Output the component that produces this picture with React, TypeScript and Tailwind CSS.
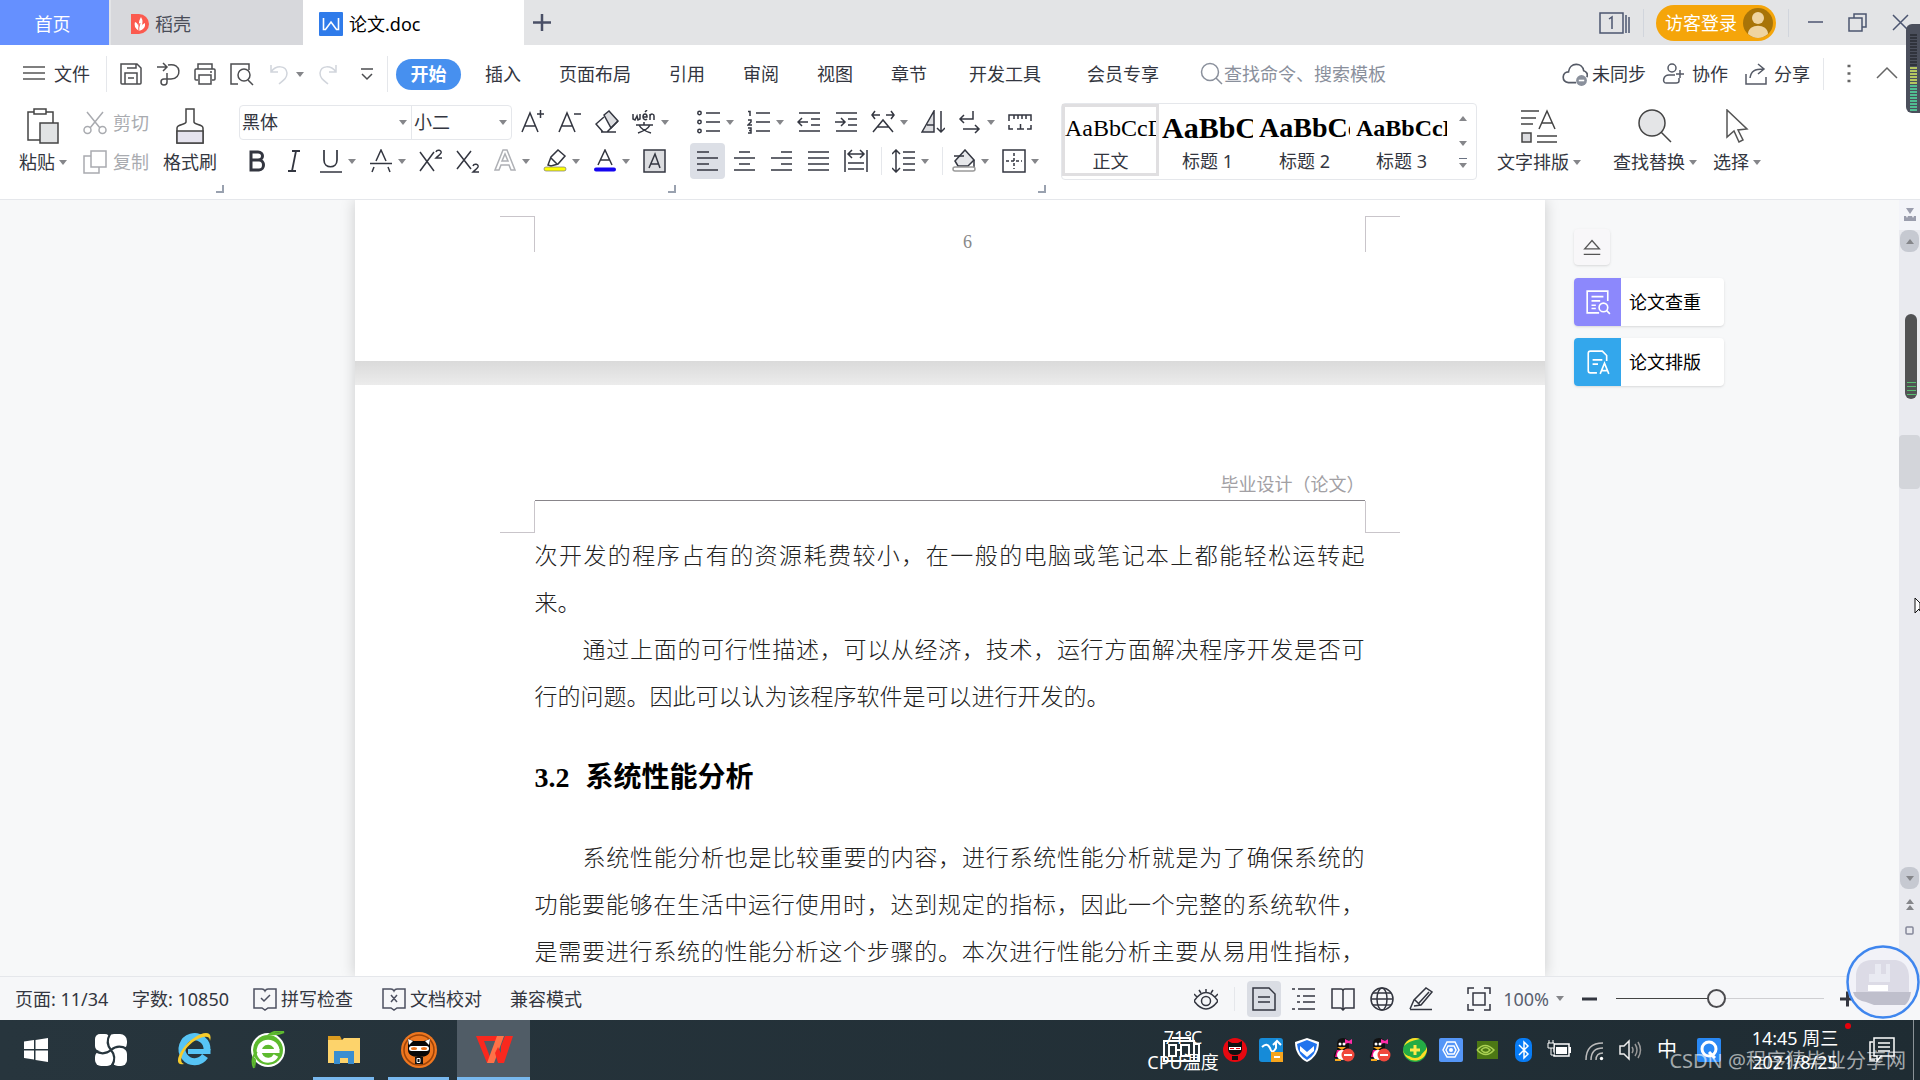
import React from "react";

type Kids = { children: React.ReactNode };

const doc = {
  carryOver: ["次开发的程序占有的资源耗费较小，在一般的电脑或笔记本上都能轻松运转起", "来。"],
  feasibility: [
    "通过上面的可行性描述，可以从经济，技术，运行方面解决程序开发是否可",
    "行的问题。因此可以认为该程序软件是可以进行开发的。",
  ],
  performance: [
    "系统性能分析也是比较重要的内容，进行系统性能分析就是为了确保系统的",
    "功能要能够在生活中运行使用时，达到规定的指标，因此一个完整的系统软件，",
    "是需要进行系统的性能分析这个步骤的。本次进行性能分析主要从易用性指标，",
  ],
};

function Svg({ size = 24, className = "", children }: Kids & { size?: number; className?: string }) {
  return (
    <svg
      width={size}
      height={size}
      viewBox="0 0 24 24"
      fill="none"
      stroke="currentColor"
      strokeWidth="1.5"
      className={`shrink-0 ${className}`}
      aria-hidden="true"
    >
      {children}
    </svg>
  );
}

function Caret({ up = false }: { up?: boolean }) {
  return (
    <svg width="8" height="5" viewBox="0 0 8 5" fill="#85868a" className="shrink-0" aria-hidden="true">
      <path d={up ? "M0 5h8L4 0z" : "M0 0h8L4 5z"} />
    </svg>
  );
}

function Tool({ label, caret = false, children }: Kids & { label: string; caret?: boolean }) {
  return (
    <button
      aria-label={label}
      className={`flex h-9 shrink-0 items-center gap-[5px] ${caret ? "w-[50px]" : "w-[37px]"}`}
    >
      <Svg>{children}</Svg>
      {caret && <Caret />}
    </button>
  );
}

function BigTool({ label, caret = true, children }: Kids & { label: string; caret?: boolean }) {
  return (
    <button className="flex shrink-0 flex-col items-center">
      <span className="flex h-[45px] items-center">{children}</span>
      <span className="flex h-7 items-center gap-1 whitespace-nowrap">
        {label}
        {caret && <Caret />}
      </span>
    </button>
  );
}

function Launcher() {
  return <span className="h-2 w-2 shrink-0 self-end border-r-2 border-b-2 border-gray-400" />;
}

function TitleBar() {
  return (
    <header className="flex h-[45px] shrink-0 items-center bg-[#e3e4e6]">
      <button className="h-full w-[109px] bg-[#6590ff] pt-[2px] pr-1 text-white">首页</button>
      <button className="ml-[2px] flex h-full w-[192px] items-center gap-[6px] bg-[#d7d8dc] pt-[2px] pl-5 text-[#4a4d58]">
        <svg width="18" height="20" viewBox="0 0 18 20" aria-hidden="true">
          <path d="M0 0h8a10 10 0 0 1 0 20H0z" fill="#fb5a4f" />
          <path d="M8 17Q2 13 4 8q3 1 4 6Q7 8 10 3q3 5 0 10 1-3 4-4 1 6-6 8z" fill="#fff" />
          <path d="M8 19q-1-5 1-10" stroke="#fb5a4f" fill="none" />
        </svg>
        稻壳
      </button>
      <button className="flex h-full w-[221px] items-center gap-[6px] bg-white pt-[2px] pl-4">
        <svg width="24" height="24" viewBox="0 0 24 24" aria-hidden="true">
          <rect width="24" height="24" rx="1" fill="#2f7bea" />
          <path d="M4.500 6v11.500h2L12 10l5.500 7.500h2V6" stroke="#fff" strokeWidth="1.600" fill="none" />
        </svg>
        论文.doc
      </button>
      <button aria-label="新建" className="ml-[6px] text-[#4a4f66]">
        <Svg><path d="M12 3v17M3 11.500h18" strokeWidth="2.5" /></Svg>
      </button>
      <div className="ml-auto flex h-full items-center text-[#4c5570]">
        <button aria-label="窗口" className="mr-[13px]">
          <svg width="31" height="22" viewBox="0 0 31 22" fill="none" stroke="currentColor" strokeWidth="1.5">
            <path d="M1 1h23v20H1zM27 3v18M30 5v16M10 7l3-2v12" />
          </svg>
        </button>
        <span className="h-7 w-px bg-gray-300" />
        <button className="ml-3 flex h-9 w-[120px] items-center justify-between rounded-full bg-[#f5a50a] pr-[3px] pl-[9px] text-white">
          访客登录
          <svg width="30" height="30" viewBox="0 0 30 30" aria-hidden="true">
            <circle cx="15" cy="15" r="15" fill="#a87408" />
            <circle cx="15" cy="10" r="6" fill="#efd4a0" />
            <path d="M5 26c0-11 20-11 20 0q-10 8-20 0" fill="#efd4a0" />
          </svg>
        </button>
        <span className="ml-3 h-7 w-px bg-gray-300" />
        <button aria-label="最小化" className="ml-4">
          <Svg><path d="M3 11h15" /></Svg>
        </button>
        <button aria-label="还原" className="ml-[18px]">
          <Svg><path d="M2 7h13v13H2zM7 7V3h12v13h-4" /></Svg>
        </button>
        <button aria-label="关闭" className="mr-[7px] ml-[18px]">
          <Svg><path d="M4 4l15 15M19 4L4 19" /></Svg>
        </button>
      </div>
    </header>
  );
}

function MenuBar() {
  return (
    <div className="flex h-[58px] shrink-0 items-center whitespace-nowrap text-[#333640]">
      <button className="ml-[22px] flex items-center gap-2">
        <Svg className="text-[#555]"><path d="M1 5h22M1 11h22M1 17h22" strokeWidth="1.7" /></Svg>
        文件
      </button>
      <span className="mr-3 ml-4 h-9 w-px bg-gray-200" />
      <div className="flex items-center text-[#4c4d50]">
        <button aria-label="保存" className="w-[37px]">
          <Svg><path d="M2 2h16l4 4v15q0 1-1 1H3q-1 0-1-1zM6 22V11h12v11M8 6h9V2M9 16h6" /></Svg>
        </button>
        <button aria-label="输出" className="w-[37px]">
          <Svg><path d="M1 5h9M7 1l4 4-4 4M12 3c14-3 14 14 3 14H8a3 3 0 1 0 3 3v-9" /></Svg>
        </button>
        <button aria-label="打印" className="w-[37px]">
          <Svg><path d="M5 7V2h14v5M5 18H3q-1 0-1-1V8q0-1 1-1h18q1 0 1 1v9q0 1-1 1h-2M6 13h12v9H6zM17 10h2" /></Svg>
        </button>
        <button aria-label="打印预览" className="w-[37px]">
          <Svg><path d="M8 22H1V2h18v6M18 18l5 5" /><circle cx="14" cy="13" r="6" /></Svg>
        </button>
        <button aria-label="撤销" className="flex w-[50px] items-center gap-[5px] text-gray-300">
          <Svg><path d="M4 3v7h7M4 10C9 3 19 3 20 11c0 5-3 7-8 11" /></Svg>
          <Caret />
        </button>
        <button aria-label="恢复" className="w-[38px] text-gray-300">
          <Svg><path d="M19 3v7h-7M19 10C14 3 4 3 3 11c0 5 3 7 8 11" /></Svg>
        </button>
        <button aria-label="自定义">
          <Svg><path d="M6 7h12M7 12l5 5 5-5" /></Svg>
        </button>
      </div>
      <span className="mr-2 ml-2 h-9 w-px bg-gray-200" />
      <nav className="flex items-center">
        <button className="mr-[5px] h-[31px] w-[65px] rounded-full bg-[#4790ef] font-bold text-white">开始</button>
        {["插入", "页面布局", "引用", "审阅", "视图", "章节"].map((name) => (
          <button key={name} className="px-[19px]">{name}</button>
        ))}
        {["开发工具", "会员专享"].map((name) => (
          <button key={name} className="px-[23px]">{name}</button>
        ))}
      </nav>
      <label className="ml-[18px] flex items-center text-[#8a909c]">
        <Svg><circle cx="10" cy="10" r="8.5" /><path d="M16 16l6 6" /></Svg>
        <input
          aria-label="查找命令、搜索模板"
          placeholder="查找命令、搜索模板"
          className="w-[170px] outline-none placeholder:text-[#8a909c]"
        />
      </label>
      <div className="ml-auto flex items-center">
        <button className="flex items-center gap-1">
          <Svg size={26} className="text-[#555a66]">
            <path d="M13 20H6C-1 19 0 10 6 10 7 1 19 1 20 9c3 1 4 3 3 6" />
            <circle cx="18" cy="18" r="5" fill="#8a909c" stroke="none" />
            <path d="M15.500 18h5" stroke="#fff" />
          </Svg>
          未同步
        </button>
        <button className="ml-4 flex items-center gap-[6px]">
          <Svg className="text-[#555a66]">
            <circle cx="10" cy="6" r="4" />
            <path d="M14 21H4c-4 0-3-8 3-8h6M14 12h8M18 8v8M17 16v3q0 2-3 2" />
          </Svg>
          协作
        </button>
        <button className="ml-4 flex items-center gap-[6px]">
          <Svg className="text-[#555a66]"><path d="M2 12v10h20v-7M6 16c1-7 5-9 13-9M14 2l6 5-6 5" /></Svg>
          分享
        </button>
        <span className="mx-[13px] h-8 w-px bg-gray-200" />
        <button aria-label="更多" className="text-[#666]">
          <Svg><path d="M10.500 4h3M10.500 11.500h3M10.500 19h3" strokeWidth="2.500" /></Svg>
        </button>
        <button aria-label="收起功能区" className="mr-[21px] ml-[14px] text-[#666]">
          <Svg><path d="M2 16L12 6l10 10" /></Svg>
        </button>
      </div>
    </div>
  );
}

const styles = [
  { name: "正文", face: "text-[24px]", box: "border-[#e0dfe1]" },
  { name: "标题 1", face: "text-[30px] font-bold", box: "border-transparent" },
  { name: "标题 2", face: "text-[28px] font-bold", box: "border-transparent" },
  { name: "标题 3", face: "text-[24px] font-bold", box: "border-transparent" },
];

function Ribbon() {
  return (
    <div className="flex h-[97px] shrink-0 items-start overflow-hidden border-b border-gray-200 pb-[6px] text-[#333640]">
      <div className="flex h-full w-[224px] shrink-0 pl-[19px]">
        <BigTool label="粘贴">
          <svg width="34" height="36" viewBox="0 0 34 36" fill="#fff" stroke="#444" strokeWidth="1.5">
            <path d="M2 4h25v28H2z" />
            <path d="M8 1h12v5H8z" />
            <path d="M14 15h18v20H14z" fill="#e1e3e4" />
          </svg>
        </BigTool>
        <div className="ml-4 flex flex-col text-[#a9abb0]">
          <button className="flex h-[39px] items-center gap-[6px]">
            <Svg><path d="M4 1l13 16M20 1L7 17" /><circle cx="4.500" cy="19" r="3.500" /><circle cx="19.500" cy="19" r="3.500" /></Svg>
            剪切
          </button>
          <button className="flex h-10 items-center gap-[6px]">
            <Svg><path d="M8 1h15v16H8zM8 6H1v17h15v-6" /></Svg>
            复制
          </button>
        </div>
        <div className="ml-[14px]">
          <BigTool label="格式刷" caret={false}>
            <svg width="28" height="36" viewBox="0 0 28 36" fill="#fff" stroke="#444" strokeWidth="1.5">
              <path d="M10 1h8v13c0 3 9 2 9 6v15H1V20c0-4 9-3 9-6z" />
              <path d="M1 23h26v12H1z" fill="#e5e3ee" />
            </svg>
          </BigTool>
        </div>
      </div>
      <div className="-ml-2 flex h-full"><Launcher /></div>

      <div className="ml-[15px] shrink-0">
        <div className="flex h-[38px] items-center">
          <div className="flex h-[35px] rounded-sm border border-gray-200">
            <div className="flex w-[172px] items-center border-r border-gray-200 pr-1">
              <select aria-label="字体" className="min-w-0 flex-1 appearance-none pl-[2px] outline-none">
                <option>黑体</option>
              </select>
              <Caret />
            </div>
            <div className="flex w-[99px] items-center pr-1">
              <select aria-label="字号" className="min-w-0 flex-1 appearance-none pl-[2px] outline-none">
                <option>小二</option>
              </select>
              <Caret />
            </div>
          </div>
          <div className="ml-[9px] flex">
            <Tool label="增大字号"><path d="M1 22L9 3l8 19M4 16h10M16 4h7M19.500 0v8" /></Tool>
            <Tool label="减小字号"><path d="M1 22L9 3l8 19M4 16h10M16 4h7" /></Tool>
            <Tool label="清除格式">
              <path d="M9 5l5-4 9 10-7 7z" fill="#dcdde0" />
              <path d="M9 7L1 14l7 8h4l11-11M6 22h15" />
            </Tool>
            <Tool label="拼音指南" caret>
              <path d="M1 4v5l2 1L5 6l1 4 2-1V4M11 7h4c0-4-4-4-4 0 0 3 3 3 4 2M13 2l2-2M18 10V4M18 6c1-3 4-2 4 0v4M4 15h17M12 12v3M18 15c-2 4-6 6-12 8M7 15c2 4 5 6 12 8" />
            </Tool>
          </div>
        </div>
        <div className="flex h-10 items-center pl-[6px]">
          <Tool label="加粗"><path d="M6 3h7c6 0 6 8 0 8H6zM6 11h8c6 0 6 10 0 10H6z" strokeWidth="3" /></Tool>
          <Tool label="倾斜"><path d="M10 2h8M6 22h8M14 2l-4 20" strokeWidth="1.8" /></Tool>
          <Tool label="下划线" caret><path d="M5 1v10c0 9 13 9 13 0V1M1 23h22" strokeWidth="1.7" /></Tool>
          <Tool label="删除线" caret><path d="M7 12l5-11 5 11M1 14.500h22M5 18l-2 5M19 18l2 5" /></Tool>
          <Tool label="上标"><path d="M1 3l14 19M15 3L1 22M17 3c1-3 6-2 5 1-1 2-3 3-5 5h6" /></Tool>
          <Tool label="下标"><path d="M1 2l14 18M15 2L1 20M17 17c1-3 6-2 5 1-1 2-3 3-5 5h6" /></Tool>
          <Tool label="文字效果" caret><path d="M2 21L10 1h4l8 20h-4l-2-5H8l-2 5zM9 12h6l-3-7z" stroke="#aeb0b5" /></Tool>
          <Tool label="突出显示" caret>
            <path d="M5 16l3-8 7-7 7 6-7 8-7 2zM8 9l6 6" />
            <rect x="1" y="18" width="22" height="4" rx="2" fill="#ff0" stroke="#777" strokeWidth=".7" />
          </Tool>
          <Tool label="字体颜色" caret>
            <path d="M5 16L12 1l7 15M7 11h10" />
            <path d="M3 20.500h18" stroke="#1505f0" strokeWidth="4" strokeLinecap="round" />
          </Tool>
          <Tool label="字符底纹">
            <path d="M1 1h21v22H1z" fill="#dcdde0" />
            <path d="M6 19l6-14 5 14M8 15h8" />
          </Tool>
        </div>
      </div>
      <div className="-ml-[14px] flex h-full"><Launcher /></div>

      <div className="ml-[14px] shrink-0">
        <div className="flex h-[38px] items-center pl-[7px]">
          <Tool label="项目符号" caret>
            <circle cx="2.500" cy="3" r="1.700" /><circle cx="2.500" cy="12" r="1.700" /><circle cx="2.500" cy="21" r="1.700" />
            <path d="M9 3h14M9 12h14M9 21h14" />
          </Tool>
          <Tool label="编号" caret>
            <path d="M1 1.500h2V6M1 10h3v2l-3 3h4M1 18h3v5H1M2 20.500h2" />
            <path d="M9 3h14M9 12h14M9 21h14" />
          </Tool>
          <Tool label="减少缩进"><path d="M2 3h21M14 9h9M14 15h9M2 21h21M1 12h10M5 8l-4 4 4 4" /></Tool>
          <Tool label="增加缩进"><path d="M2 3h21M14 9h9M14 15h9M2 21h21M1 12h10M7 8l4 4-4 4" /></Tool>
          <Tool label="中文版式" caret>
            <path d="M1 5h8M4 1L1 5l3 4M15 5h8M20 1l3 4-3 4M2 22L12 10l10 12M6 17h12" />
          </Tool>
          <Tool label="排序">
            <path d="M1 22L13 1v21zM6 15h7" fill="#dcdde0" />
            <path d="M20 1v21M16 18l4 4 4-4" />
          </Tool>
          <Tool label="换行" caret><path d="M15 1v8H2M6 5L2 9l4 4M5 19h16M17 15l4 4-4 4" /></Tool>
          <Tool label="标尺"><path d="M1 11V5h22v6M6 5v4M10 5v4M14 5v4M18 5v4M1 15v4h4M23 15v4h-4M9 19h7M12.500 14v5" /></Tool>
        </div>
        <div className="flex h-10 items-center">
          <button aria-label="左对齐" className="flex h-9 w-[35px] items-center rounded-sm bg-[#dcdfe6] pl-[7px]">
            <Svg><path d="M0 3h12M0 9h21M0 15h12M0 21h21" strokeWidth="1.700" /></Svg>
          </button>
          <div className="ml-[8px] flex">
            <Tool label="居中"><path d="M6 3h11M1 9h21M6 15h11M1 21h21" /></Tool>
            <Tool label="右对齐"><path d="M11 3h11M1 9h21M11 15h11M1 21h21" /></Tool>
            <Tool label="两端对齐"><path d="M1 3h21M1 9h21M1 15h21M1 21h21" /></Tool>
            <Tool label="分散对齐"><path d="M1 1v22M23 1v22M4 5h16M8 1L4 5l4 4M16 1l4 4-4 4M4 14h16M4 20h16" /></Tool>
          </div>
          <span className="mr-[10px] h-7 w-px bg-gray-200" />
          <Tool label="行距" caret><path d="M4 1v22M0 5l4-4 4 4M0 19l4 4 4-4M11 3h12M11 9h12M11 15h12M11 21h12" /></Tool>
          <span className="mr-[9px] h-7 w-px bg-gray-200" />
          <Tool label="底纹" caret>
            <path d="M3 12L13 1l9 10-6 6H6z" fill="#e6e7ea" />
            <path d="M2 7h10M22 11v8" />
            <rect x="1" y="18" width="22" height="4" rx="2" fill="#fff" stroke="#999" />
          </Tool>
          <Tool label="边框" caret>
            <path d="M1 1h22v22H1z" />
            <path d="M12 4v16M4 12h16" strokeDasharray="3 2" />
          </Tool>
        </div>
      </div>
      <div className="-ml-[14px] flex h-full"><Launcher /></div>

      <div className="ml-[15px] flex h-[77px] shrink-0 items-stretch rounded-sm border border-gray-200 pb-[3px]">
        {styles.map((s) => (
          <button key={s.name} className={`flex w-[97px] flex-col items-center border-[3px] ${s.box}`}>
            <span className={`flex h-11 w-full items-center overflow-hidden font-['Liberation_Serif',serif] whitespace-nowrap text-black ${s.face}`}>
              AaBbCcDd
            </span>
            <span className="leading-6">{s.name}</span>
          </button>
        ))}
        <div className="flex w-[26px] flex-col items-center justify-between pt-1">
          <button aria-label="上一行" className="flex h-5 items-center"><Caret up /></button>
          <button aria-label="下一行" className="flex h-5 items-center"><Caret /></button>
          <button aria-label="展开样式" className="mb-1 border-t border-gray-500 pt-1 pb-1"><Caret /></button>
        </div>
      </div>

      <div className="ml-5 flex shrink-0">
        <BigTool label="文字排版">
          <svg width="36" height="34" viewBox="0 0 36 34" fill="none" stroke="#444" strokeWidth="1.5">
            <path d="M0 2h18M0 9h15M0 15h12M16 27h20M16 33h20M18 20l8-18 8 18M21 14h10" />
            <path d="M1 24h9v9H1z" fill="#dcdde0" />
          </svg>
        </BigTool>
        <div className="ml-8">
          <BigTool label="查找替换">
            <svg width="34" height="34" viewBox="0 0 34 34" fill="#e4e5e7" stroke="#444" strokeWidth="1.5">
              <circle cx="14" cy="14" r="13" />
              <path d="M23 23l10 10" />
            </svg>
          </BigTool>
        </div>
        <div className="ml-4">
          <BigTool label="选择">
            <svg width="24" height="34" viewBox="0 0 24 34" fill="#fff" stroke="#555" strokeWidth="1.5">
              <path d="M2 1v27l7-6 5 11 4-2-5-10 9-1z" />
            </svg>
          </BigTool>
        </div>
      </div>
    </div>
  );
}

function Lines({ lines, indent = false, open = false }: { lines: string[]; indent?: boolean; open?: boolean }) {
  return (
    <p className="text-[23px] leading-[47px] font-light text-[#222]">
      {lines.map((line, i) => {
        const full = open || i < lines.length - 1;
        return (
          <span
            key={line}
            className={`block whitespace-nowrap ${full ? "[text-align-last:justify]" : ""} ${indent && i === 0 ? "pl-12" : ""}`}
          >
            {line}
          </span>
        );
      })}
    </p>
  );
}

function SidePanel() {
  return (
    <aside className="absolute top-[29px] right-[175px] flex w-[150px] flex-col gap-3">
      <button aria-label="收起" className="mb-[1px] flex h-9 w-9 items-center justify-center rounded bg-[#f8f7f9] text-[#555] shadow">
        <Svg size={22}><path d="M4 14L12 5l8 9zM3 20h18" /></Svg>
      </button>
      <button className="flex h-12 items-center overflow-hidden rounded bg-white text-black shadow">
        <span className="flex h-full w-[47px] items-center justify-center bg-[#8c88fc] text-white">
          <Svg size={26}>
            <path d="M13 22H2V2h19v9M6 7h11M6 11h8M6 15h4M6 18h4M20 20l3 3" />
            <circle cx="17" cy="17" r="4" />
          </Svg>
        </span>
        <span className="pl-2">论文查重</span>
      </button>
      <button className="flex h-12 items-center overflow-hidden rounded bg-white text-black shadow">
        <span className="flex h-full w-[47px] items-center justify-center bg-[#33a7ec] text-white">
          <Svg size={26}>
            <path d="M11 22H5q-2 0-2-2V4q0-2 2-2h11l4 4v5M7 10h9M7 14h5M14 23l4-10 4 10M15 20h6" />
          </Svg>
        </span>
        <span className="pl-2">论文排版</span>
      </button>
    </aside>
  );
}

function ScrollColumn() {
  return (
    <div className="flex w-[21px] shrink-0 flex-col items-center bg-[#e9eaef] text-[#9a9dad]">
      <div className="flex h-[30px] w-full items-center justify-center bg-[#f3f4f9]">
        <svg width="12" height="14" viewBox="0 0 12 14" fill="currentColor">
          <path d="M2 0h8L6 6zM0 8h2l1 2 1-2h4l1 2 1-2h2v5H0z" />
        </svg>
      </div>
      <button aria-label="向上滚动" className="flex h-[22px] w-[19px] items-center justify-center rounded-lg bg-[#c6c9d1]">
        <Caret up />
      </button>
      <div className="mt-[183px] h-[54px] w-full rounded bg-[#d3d5da]" />
      <button aria-label="向下滚动" className="mt-auto flex h-[22px] w-[19px] items-center justify-center rounded-lg bg-[#c6c9d1]">
        <Caret />
      </button>
      <button aria-label="上一页" className="mt-[10px] flex flex-col gap-[1px]"><Caret up /><Caret up /></button>
      <button aria-label="选择浏览对象" className="mt-4 mb-[41px]">
        <svg width="9" height="9" viewBox="0 0 9 9" fill="none" stroke="#85889a" strokeWidth="1.500">
          <rect x="1" y="1" width="7" height="7" rx="1" />
        </svg>
      </button>
    </div>
  );
}

function DocumentArea() {
  return (
    <main className="flex min-h-0 flex-1 bg-[#f7f8f9]">
      <div className="relative flex min-w-0 flex-1 justify-center overflow-hidden">
        <div className="flex w-[1190px] flex-col font-['Liberation_Serif','Noto_Sans_CJK_SC',serif] shadow-[0_0_14px_rgba(0,0,0,0.18)]">
          <section className="flex h-[161px] shrink-0 items-start justify-center bg-white pt-4">
            <span className="h-9 w-[35px] border-t border-r border-[#c9c5ca]" />
            <span className="w-[830px] pt-[14px] pl-9 text-center text-[18px] text-[#888]">6</span>
            <span className="h-9 w-[35px] border-t border-l border-[#c9c5ca]" />
          </section>
          <div className="h-6 shrink-0 bg-linear-to-b from-[#dadada] to-[#ececec]" />
          <section className="min-h-0 flex-1 overflow-hidden bg-white pt-[86px]">
            <div className="mx-auto w-[830px] border-b border-[#88858a] pb-px text-right leading-7 text-[#a2a0a4]">
              毕业设计（论文）
            </div>
            <div className="flex justify-center">
              <span className="h-8 w-[35px] border-r border-b border-[#c9c5ca]" />
              <span className="w-[830px]" />
              <span className="h-8 w-[35px] border-b border-l border-[#c9c5ca]" />
            </div>
            <div className="mx-auto w-[830px]">
              <Lines lines={doc.carryOver} />
              <Lines lines={doc.feasibility} indent />
              <h2 className="flex h-[114px] items-center gap-4 text-[28px] font-bold text-black">
                <span className="text-[28px]">3.2</span>系统性能分析
              </h2>
              <Lines lines={doc.performance} indent open />
            </div>
          </section>
        </div>
        <SidePanel />
      </div>
      <ScrollColumn />
    </main>
  );
}

function StatusBar() {
  return (
    <footer className="flex h-11 shrink-0 items-center border-t border-gray-200 bg-[#f6f7f9] whitespace-nowrap text-[#333640]">
      <span className="ml-[15px] w-[117px]">页面: 11/34</span>
      <span className="w-[121px]">字数: 10850</span>
      <button className="flex w-[129px] items-center gap-1">
        <Svg className="text-[#4c5060]"><path d="M1 2h8q2 0 3 2 1-2 3-2h8v19h-8l-3 2-3-2H1zM8 11l3 3 6-6" /></Svg>
        拼写检查
      </button>
      <button className="flex w-[128px] items-center gap-1">
        <Svg className="text-[#4c5060]"><path d="M1 2h8q2 0 3 2 1-2 3-2h8v19h-8l-3 2-3-2H1zM9 8l6 7M15 8l-6 7" /></Svg>
        文档校对
      </button>
      <span>兼容模式</span>
      <div className="ml-auto flex items-center">
        <button aria-label="护眼模式">
          <Svg><path d="M0 14q12-17 24 0-12 16-24 0M12 2v3M5 3l2 3M19 3l-2 3M0 7l3 3M24 7l-3 3" /><circle cx="12" cy="14" r="4.500" /></Svg>
        </button>
        <span className="mr-3 ml-4 h-6 w-px bg-gray-200" />
        <button aria-label="页面视图" className="mr-[11px] flex h-9 w-[34px] items-center justify-center rounded bg-[#dadde4]">
          <Svg><path d="M1 1h16l6 6v16H1zM6 10h12M6 15h12" /></Svg>
        </button>
        <div className="flex">
          <button aria-label="大纲" className="w-[39px]"><Svg><path d="M0 2h3M6 2h17M5 9h3M11 9h12M5 15h3M11 15h12M0 22h3M6 22h17" /></Svg></button>
          <button aria-label="阅读版式" className="w-[39px]"><Svg><path d="M1 2h9q2 0 2 2 0-2 2-2h9v19h-9l-2 2-2-2H1zM12 4v19" /></Svg></button>
          <button aria-label="Web版式" className="w-[39px]"><Svg><circle cx="12" cy="12" r="11" /><ellipse cx="12" cy="12" rx="5" ry="11" /><path d="M1 12h22M3 6h18M3 18h18" /></Svg></button>
          <button aria-label="写作模式" className="w-[58px]"><Svg><path d="M1 22l4-9L17 1l6 4-11 13-7 1M6 13l5 5M20 5L10 16M1 22.500h22" /></Svg></button>
        </div>
        <button aria-label="适应窗口"><Svg><path d="M1 7V1h6M17 1h6v6M23 17v6h-6M7 23H1v-6M6 6h12v12H6z" /></Svg></button>
        <button className="ml-3 flex items-center gap-[7px] text-[#5a5f70]">100%<Caret /></button>
        <button aria-label="缩小" className="ml-4"><Svg><path d="M2 12h15" strokeWidth="3" /></Svg></button>
        <input
          type="range"
          aria-label="缩放"
          min="0"
          max="100"
          defaultValue="48"
          className="mx-3 h-px w-[208px] appearance-none bg-linear-to-r from-[#444] from-50% to-[#cfcfd2] to-50% [&::-webkit-slider-thumb]:h-[19px] [&::-webkit-slider-thumb]:w-[19px] [&::-webkit-slider-thumb]:appearance-none [&::-webkit-slider-thumb]:rounded-full [&::-webkit-slider-thumb]:border-2 [&::-webkit-slider-thumb]:border-[#4b4b4f] [&::-webkit-slider-thumb]:bg-[#f4f4f6]"
        />
        <button aria-label="放大" className="mr-[60px]"><Svg><path d="M4 12h15M11.500 4.500v15" strokeWidth="3" /></Svg></button>
      </div>
    </footer>
  );
}

function TaskButton({ label, state = "", children }: Kids & { label: string; state?: string }) {
  return (
    <button aria-label={label} className={`flex h-full shrink-0 items-center justify-center ${state}`}>
      <svg width="38" height="38" viewBox="0 0 38 38" aria-hidden="true">{children}</svg>
    </button>
  );
}

function TrayIcon({ children }: Kids) {
  return <svg width="24" height="24" viewBox="0 0 24 24" className="shrink-0" aria-hidden="true">{children}</svg>;
}

function Penguin() {
  return (
    <TrayIcon>
      <path d="M3 20q-1-4 3-8V6q0-6 6-6t6 6v6q4 4 2 9z" fill="#111" />
      <path d="M6 12h12l2 7H4z" fill="#f4148f" />
      <ellipse cx="11" cy="17" rx="5" ry="5" fill="#fff" />
      <path d="M14 1l4 2 3-2v5l-4-1-3 1z" fill="#ff2ca8" />
      <circle cx="9" cy="6" r="1.500" fill="#fff" /><circle cx="13" cy="6" r="1.500" fill="#fff" />
      <path d="M6 9h9l-4 3z" fill="#f8a91c" />
      <path d="M4 22h6" stroke="#f8a91c" strokeWidth="2" />
      <circle cx="17" cy="17" r="6.500" fill="#f0483c" />
      <path d="M13 17h8" stroke="#fff" strokeWidth="2" />
    </TrayIcon>
  );
}

function TaskBar() {
  return (
    <div className="relative flex h-[60px] shrink-0 items-center bg-linear-to-r from-[#27353d] to-[#1f2c33] text-white">
      <TaskButton label="开始菜单" state="w-[73px]">
        <path d="M6 10.500L16 9v9H6zM17.500 9L30 7v11H17.500zM6 19.500h10v9L6 27zM17.500 19.500H30V31l-12.500-2z" fill="#fff" />
      </TaskButton>
      <TaskButton label="应用" state="w-[76px]">
        <g fill="#fff">
          <rect x="3" y="3" width="15" height="14" rx="5" /><rect x="15" y="3" width="20" height="16" rx="7" />
          <rect x="20" y="17" width="15" height="18" rx="6" /><rect x="3" y="20" width="18" height="15" rx="6" />
          <rect x="3" y="7" width="14" height="13" rx="5" /><circle cx="19" cy="19" r="7" />
        </g>
        <path d="M18 3q-5 9 1 16M35 18q-9-5-16 1M20 35q5-9-1-16M3 20q9 5 16-1" stroke="#27353d" strokeWidth="2.200" fill="none" />
      </TaskButton>
      <TaskButton label="Internet Explorer" state="w-[90px]">
        <path d="M30 25A12.500 12.500 0 1 1 32 19" fill="none" stroke="#57c4f5" strokeWidth="7" />
        <path d="M13 20.500h22.500" stroke="#57c4f5" strokeWidth="5" />
        <path d="M9 33C-4 36 6 15 19 7 29 0 38 0 35 10c0-5-5-6-14-1C9 16 2 31 9 33z" fill="#f7cb2b" />
      </TaskButton>
      <TaskButton label="浏览器" state="w-[58px]">
        <circle cx="19" cy="19" r="17" fill="#fff" /><circle cx="19" cy="19" r="15" fill="#5dba2e" />
        <path d="M27 24.500A9 9 0 1 1 28 19" fill="none" stroke="#fff" strokeWidth="5" />
        <path d="M12 20h18.500" stroke="#fff" strokeWidth="4" />
        <path d="M5 37Q1 27 8 21M35 1q-8-2-14 2 8 1 14-2" fill="none" stroke="#5dba2e" strokeWidth="2" />
        <path d="M6 37Q9 24 3 27" fill="#5dba2e" />
      </TaskButton>
      <TaskButton label="文件资源管理器" state="ml-4 w-[61px] border-b-[3px] border-[#78b8ee]">
        <path d="M3 6h12l2 4H3z" fill="#dc9c20" /><path d="M3 10h14l2-2h16v25H3z" fill="#fdd36b" />
        <path d="M9 21h20v13h-6v-6h-8v6H9z" fill="#3a8ed0" />
      </TaskButton>
      <TaskButton label="录屏" state="ml-[14px] w-[61px] border-b-[3px] border-[#78b8ee]">
        <circle cx="19" cy="20" r="18" fill="#ef771f" /><circle cx="19" cy="20" r="15" fill="none" stroke="#9c4308" strokeWidth="1.500" />
        <path d="M8 9l6 2h10l6-2v9q1 9-11 9T8 18z" fill="#080808" />
        <path d="M8 9l5 2-4 4zM30 9l-5 2 4 4z" fill="#fff" />
        <rect x="9" y="16" width="20" height="5" rx="2.500" fill="#fff" />
        <ellipse cx="14" cy="18.500" rx="3" ry="1.500" fill="#ef771f" /><ellipse cx="24" cy="18.500" rx="3" ry="1.500" fill="#ef771f" />
        <rect x="15" y="27" width="8" height="7" fill="#111" /><path d="M17 28.500h3v4h-3z" stroke="#fff" fill="none" />
      </TaskButton>
      <TaskButton label="WPS" state="ml-2 w-[73px] bg-[#505c66] border-b-[3px] border-[#78b8ee]">
        <path d="M1 6h27l-1 5H9l6 16-2 6h-1z" fill="#f9281e" />
        <path d="M22 6h7L19 33h-7z" fill="#ff7147" />
        <path d="M26 16l4-10h8l-9 27h-6l-3-10 3-6 3 6z" fill="#f9281e" />
      </TaskButton>

      <div className="ml-auto flex items-center">
        <div className="relative w-[80px] text-center leading-[25px]">
          <div>71℃</div>
          <div>CPU温度</div>
          <svg width="38" height="26" viewBox="0 0 38 26" className="absolute top-3 left-5" fill="none" stroke="#fff" strokeWidth="2" aria-hidden="true">
            <path d="M1 4h30v20H1zM6 8h7v11H6zM18 8h8v11h-8zM9 1h18v3M31 7h5v17h-5M13 13h5" />
          </svg>
        </div>
        <div className="flex gap-3">
          <TrayIcon>
            <circle cx="12" cy="12" r="12" fill="#e80810" /><path d="M5 3l4 2h6l4-2v9q-1 5-7 5t-7-5zM9 18h6v4H9z" fill="#111" />
            <path d="M6 9h12v3H6z" fill="#fff" /><path d="M7 10h4v1H7zM13 10h4v1h-4z" fill="#e80810" />
          </TrayIcon>
          <TrayIcon>
            <rect width="24" height="24" rx="3" fill="#168bd8" /><path d="M3 9q5-5 8 1 2 7 6 0V4M14 7l4-4 4 4" stroke="#fff" strokeWidth="2" fill="none" />
            <path d="M12 14h12v10H12z" fill="#f6a51d" /><path d="M15 19h6" stroke="#fff" strokeWidth="2" />
          </TrayIcon>
          <TrayIcon>
            <path d="M12 0l12 4q0 14-12 20Q0 18 0 4z" fill="#fff" /><path d="M12 2l10 4q-1 11-10 16Q3 17 2 6z" fill="#2173ed" />
            <path d="M5 8l7 6 7-6v5l-7 6-7-6z" fill="#fff" />
          </TrayIcon>
          <Penguin />
          <Penguin />
          <TrayIcon>
            <circle cx="12" cy="12" r="12" fill="#24ac45" /><path d="M0 12q2 8 12 6 10-2 12-9a12 12 0 0 1-24 3" fill="#ffdd25" /><path d="M1 8a12 12 0 0 1 16-7Q5 3 1 8" fill="#ffdd25" />
            <circle cx="12" cy="12" r="8" fill="#24ac45" />
            <path d="M12 7v10M7 12h10" stroke="#ffe94a" strokeWidth="3" />
          </TrayIcon>
          <TrayIcon>
            <rect width="24" height="24" rx="2" fill="#5596f7" /><path d="M8 4h8l4 8-4 7H8l-4-7zM9 8h6l2 4-2 4H9l-2-4z" stroke="#fff" fill="none" strokeWidth="1.500" /><circle cx="12" cy="12" r="2" fill="#fff" />
          </TrayIcon>
          <TrayIcon>
            <path d="M2 3h21v18H2z" fill="#4c7814" /><path d="M2 12q8-9 17 0-8 9-17 0M6 12q5-5 9 0-4 5-9 0" fill="none" stroke="#abd153" strokeWidth="1.500" />
          </TrayIcon>
          <TrayIcon>
            <rect x="4" width="17" height="24" rx="7" fill="#087cf5" /><path d="M8 7l9 9-4 4V4l4 4-9 9" fill="none" stroke="#fff" strokeWidth="1.500" />
          </TrayIcon>
          <TrayIcon>
            <path d="M7 6h15v12H7z" fill="none" stroke="#fff" strokeWidth="1.500" /><path d="M9 9h11v7H9zM22 9h2v6h-2z" fill="#fff" /><path d="M1 5h6v5H1zM2 2v3M6 2v3M4 10v7h4" stroke="#fff" fill="#1f2c33" />
          </TrayIcon>
          <TrayIcon>
            <path d="M3 22Q3 5 20 5M8 22Q8 10 20 10M13 22q0-7 7-7" stroke="#bbb" strokeWidth="1.500" fill="none" /><circle cx="18.500" cy="20.500" r="1.700" fill="#fff" />
          </TrayIcon>
          <TrayIcon>
            <path d="M1 8h4l5-5v18l-5-5H1z" fill="none" stroke="#eee" strokeWidth="1.500" />
            <path d="M13 9q2 3 0 6M16 6q4 6 0 12M19 4q5 8 0 16" fill="none" stroke="#999" strokeWidth="1.500" />
          </TrayIcon>
          <span className="w-6 text-center text-[20px] leading-6">中</span>
        </div>
        <span className="ml-[18px] flex"><TrayIcon>
          <rect width="24" height="24" rx="2" fill="#2988f4" /><circle cx="12" cy="11" r="7" fill="none" stroke="#fff" strokeWidth="3" /><path d="M12 14l6 6" stroke="#fff" strokeWidth="3" />
        </TrayIcon></span>
        <div className="ml-6 w-[100px] text-center leading-[24px] whitespace-nowrap">
          <div>14:45 周三</div>
          <div>2021/8/25</div>
        </div>
        <span className="mb-12 h-[6px] w-[6px] rounded-full bg-red-600" />
        <svg width="26" height="26" viewBox="0 0 26 26" className="ml-[18px] shrink-0" fill="none" stroke="#fff" strokeWidth="1.500" aria-hidden="true">
          <path d="M5 1h20v18H12l-4 5v-5H5zM9 6h12M9 10h12M9 14h12M4 5H1v18h5" />
        </svg>
        <span className="mr-[6px] ml-[18px] h-[60px] w-px bg-[#8a9297]" />
      </div>
      <span className="absolute right-[14px] bottom-[3px] text-[20px] leading-8 whitespace-nowrap text-white/60">CSDN @程序猿毕业分享网</span>
    </div>
  );
}

const meterBars = Array.from({ length: 26 }, (_, i) => i);

function Overlays() {
  return (
    <>
      {/* sound level meters docked on the right edge */}
      <div className="absolute top-[24px] right-0 flex h-[89px] w-[14px] flex-col items-center gap-px rounded-l-md bg-[#4b4f5c] pt-[10px]">
        {meterBars.map((i) => (
          <span key={i} className={`h-[2px] w-[7px] shrink-0 ${i < 11 ? "bg-[#30333c]" : i < 17 ? "bg-[#b5c660]" : "bg-[#50bd91]"}`} />
        ))}
      </div>
      <div className="absolute top-[314px] right-[3px] flex h-[85px] w-[12px] flex-col items-center justify-end gap-[3px] rounded-full bg-[#515254] pb-1">
        {meterBars.slice(0, 4).map((i) => (
          <span key={i} className="h-px w-[9px] bg-[#58bd70]" />
        ))}
      </div>
      <svg width="74" height="76" viewBox="0 0 74 76" className="absolute right-0 bottom-[60px]" aria-hidden="true">
        <circle cx="37" cy="38" r="35.500" fill="#f2f2f8" stroke="#3f86ee" strokeWidth="2.500" />
        <path d="M10 48V30q2-14 16-14h24q12 2 13 16v16z" fill="#dcdbe6" />
        <path d="M29 20h6v10h5V20h4v18H23v-8h6z" fill="#e9eaf2" />
        <path d="M22 41h20v6H22z" fill="#fff" />
        <path d="M7 48h58q-1 9-6 13H28l-8-3q-11-2-13-10" fill="#bfbfcc" />
      </svg>
      <svg width="6" height="20" viewBox="0 0 6 20" className="absolute top-[597px] right-0" aria-hidden="true">
        <path d="M1 1v15l4-4 1 2V6z" fill="#fff" stroke="#111" />
      </svg>
    </>
  );
}

export default function App() {
  return (
    <div className="relative flex h-screen flex-col overflow-hidden bg-white font-['Noto_Sans','Noto_Sans_CJK_SC',sans-serif] text-[18px] leading-6 text-black">
      <TitleBar />
      <MenuBar />
      <Ribbon />
      <DocumentArea />
      <StatusBar />
      <TaskBar />
      <Overlays />
    </div>
  );
}
